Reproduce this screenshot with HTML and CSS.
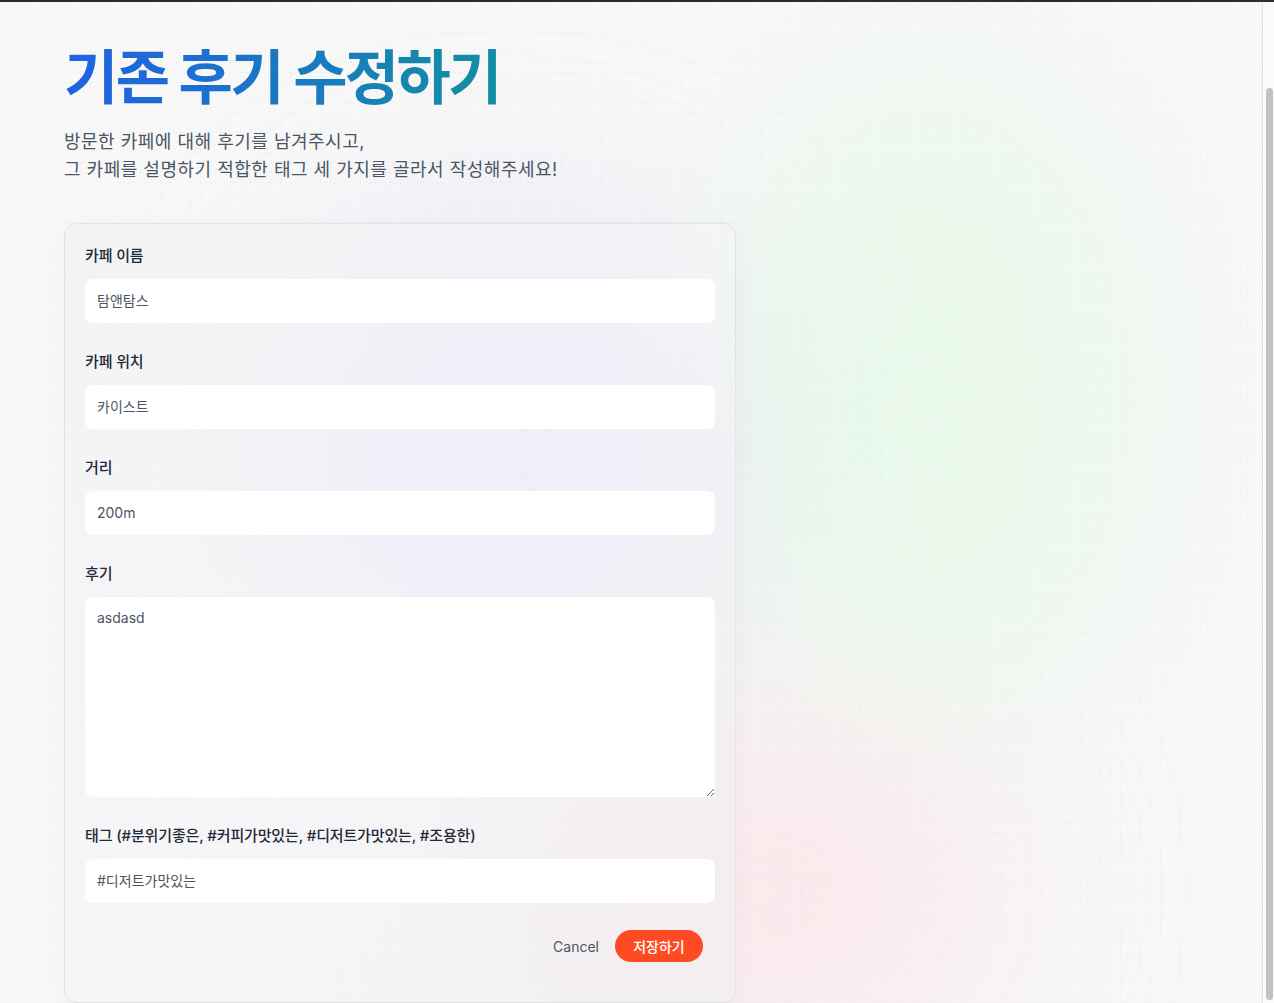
FILE: index.html
```html
<!DOCTYPE html>
<html lang="ko">
<head>
<meta charset="utf-8">
<title>기존 후기 수정하기</title>
<link rel="stylesheet" href="styles.css">
</head>
<body>
<div class="topbar"></div>
<div class="frame">
  <main class="content">
    <div class="blob blob-purple"></div>
    <div class="blob blob-green"></div>
    <div class="blob blob-pink"></div>
    <header class="intro">
      <h1 class="title">기존 후기 수정하기</h1>
      <p class="subtitle">방문한 카페에 대해 후기를 남겨주시고,<br>그 카페를 설명하기 적합한 태그 세 가지를 골라서 작성해주세요!</p>
    </header>
    <form class="card">
      <label class="field">
        <span class="label">카페 이름</span>
        <input class="input" type="text" value="탐앤탐스">
      </label>
      <label class="field">
        <span class="label">카페 위치</span>
        <input class="input" type="text" value="카이스트">
      </label>
      <label class="field">
        <span class="label">거리</span>
        <input class="input" type="text" value="200m">
      </label>
      <label class="field">
        <span class="label">후기</span>
        <textarea class="input textarea">asdasd</textarea>
      </label>
      <label class="field">
        <span class="label">태그 (#분위기좋은, #커피가맛있는, #디저트가맛있는, #조용한)</span>
        <input class="input" type="text" value="#디저트가맛있는">
      </label>
      <div class="actions">
        <button type="button" class="btn-cancel">Cancel</button>
        <button type="button" class="btn-save">저장하기</button>
      </div>
    </form>
  </main>
  <div class="scrollbar"><div class="thumb"></div></div>
</div>
</body>
</html>
```
FILE: styles.css
```css
* { box-sizing: border-box; }
html, body { margin: 0; padding: 0; height: 100%; overflow: hidden; }
body {
  font-family: Inter, "Noto Sans CJK KR", sans-serif;
  background: #f8f8f8;
  color: #1f2937;
}
.topbar { height: 2px; background: #2e2e2e; }
.frame { display: flex; height: 1001px; }
.content {
  flex: 1;
  position: relative;
  overflow: hidden;
  padding: 36px 64px 0;
  background-color: #f8f8f8;
  background-image:
    linear-gradient(rgba(0,0,0,0.014) 1px, transparent 1px),
    linear-gradient(90deg, rgba(0,0,0,0.014) 1px, transparent 1px);
  background-size: 10px 10px;
}
.blob {
  position: absolute;
  border-radius: 50%;
  filter: blur(90px);
  pointer-events: none;
}
.blob-purple { left: 280px; top: 220px; width: 460px; height: 460px; background: rgba(215, 205, 250, 0.45); }
.blob-green { left: 720px; top: 80px; width: 420px; height: 620px; background: rgba(215, 250, 220, 0.45); }
.blob-pink { left: 520px; top: 720px; width: 480px; height: 340px; background: rgba(252, 215, 222, 0.45); }
.intro { position: relative; }
.title {
  display: inline-block;
  margin: 0;
  font-size: 59px;
  line-height: 80px;
  font-weight: 700;
  letter-spacing: -0.045em;
  background: linear-gradient(90deg, #2161e3, #138fa3);
  -webkit-background-clip: text;
  background-clip: text;
  color: transparent;
}
.subtitle {
  margin: 10px 0 0;
  font-size: 18px;
  line-height: 28px;
  letter-spacing: 0.5px;
  color: #4b5563;
}
.card {
  position: relative;
  width: 672px;
  margin-top: 39px;
  padding: 20px 20px 40px;
  border: 1px solid #e2e3e7;
  border-radius: 12px;
  background: linear-gradient(135deg, rgba(242,242,244,0.85), rgba(245,245,248,0.55) 50%, rgba(240,238,240,0.7));
  box-shadow: 0 4px 20px rgba(0,0,0,0.03);
}
.field { display: flex; flex-direction: column; margin-bottom: 27px; }
.label {
  font-size: 15px;
  line-height: 24px;
  font-weight: 500;
  letter-spacing: -0.15px;
  color: #1f2937;
  margin-bottom: 11px;
}
.input {
  height: 44px;
  border: none;
  border-radius: 8px;
  background: #fff;
  padding: 0 12px 2px;
  font-family: Inter, "Noto Sans CJK KR", sans-serif;
  font-size: 14px;
  color: #4b5563;
  outline: none;
}
.textarea { height: 200px; padding: 11px 12px; resize: vertical; line-height: 20px; }
.actions { display: flex; justify-content: flex-end; align-items: center; gap: 16px; padding-right: 12px; margin-top: 27px; }
.btn-cancel {
  border: none; background: none; padding: 0;
  font-family: Inter, "Noto Sans CJK KR", sans-serif;
  font-size: 14px; color: #4b5563;
}
.btn-save {
  border: none;
  height: 32px;
  width: 88px;
  border-radius: 16px;
  background: #ff4b24;
  color: #fff;
  font-family: Inter, "Noto Sans CJK KR", sans-serif;
  font-size: 14px;
  font-weight: 500;
}
.scrollbar {
  width: 12px;
  border-left: 1px solid #e2e2e2;
  background: #fafafa;
  padding: 86px 1px 3px 3px;
}
.thumb { height: 100%; border-radius: 4px; background: #c2c2c2; }
```
